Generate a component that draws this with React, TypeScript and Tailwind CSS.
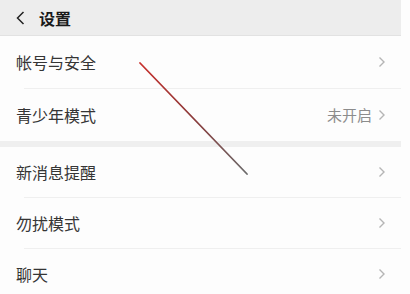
import React from 'react';

const font = { fontFamily: '"Noto Sans CJK SC", "Noto Sans", sans-serif' };

interface RowProps {
  label: string;
  value?: string;
  divider?: boolean;
  height?: string;
}

const Chevron: React.FC = () => (
  <svg width="8" height="12" viewBox="0 0 8 12" className="ml-[6px]">
    <path d="M1.5 1.5 L6 6 L1.5 10.5" fill="none" stroke="#b5b5b5" strokeWidth="1.4" />
  </svg>
);

const Row: React.FC<RowProps> = ({ label, value, divider = true, height = 'h-[52px]' }) => (
  <div className="bg-[#fdfdfd]">
    <div className={`flex items-center justify-between pl-[16px] pr-[15px] ${height}`}>
      <span className="text-[16px] text-[#353535]">{label}</span>
      <div className="flex items-center">
        {value && <span className="text-[15px] text-[#8c8c8c]">{value}</span>}
        <Chevron />
      </div>
    </div>
    {divider && <div className="ml-[24px] h-px bg-[#efefef]" />}
  </div>
);

export default function App() {
  return (
    <div className="relative w-[410px] h-[294px] overflow-hidden bg-[#fdfdfd]" style={font}>
      <div className="w-[401px]">
        {/* Header */}
        <div className="flex items-center h-[36px] bg-[#ededed] border-b border-[#e2e2e2] pl-[16px]">
          <svg width="9" height="14" viewBox="0 0 9 14">
            <path d="M7.5 1 L1.5 7 L7.5 13" fill="none" stroke="#222" strokeWidth="1.5" />
          </svg>
          <span className="ml-[14px] text-[16px] font-semibold text-[#1a1a1a]">设置</span>
        </div>

        <Row label="帐号与安全" />
        <Row label="青少年模式" value="未开启" divider={false} />
        <div className="h-[6px] bg-[#efefef]" />
        <Row label="新消息提醒" height="h-[50px]" />
        <Row label="勿扰模式" height="h-[50px]" />
        <Row label="聊天" divider={false} height="h-[50px]" />
      </div>

      {/* annotation line */}
      <svg className="absolute left-0 top-0 pointer-events-none" width="410" height="294">
        <defs>
          <linearGradient id="ln" x1="140" y1="63" x2="247" y2="174" gradientUnits="userSpaceOnUse">
            <stop offset="0" stopColor="#c8302c" />
            <stop offset="0.5" stopColor="#8a3a3a" />
            <stop offset="1" stopColor="#6a6a6a" />
          </linearGradient>
        </defs>
        <line x1="140" y1="63" x2="247" y2="174" stroke="url(#ln)" strokeWidth="1.8" strokeLinecap="round" />
      </svg>
    </div>
  );
}
